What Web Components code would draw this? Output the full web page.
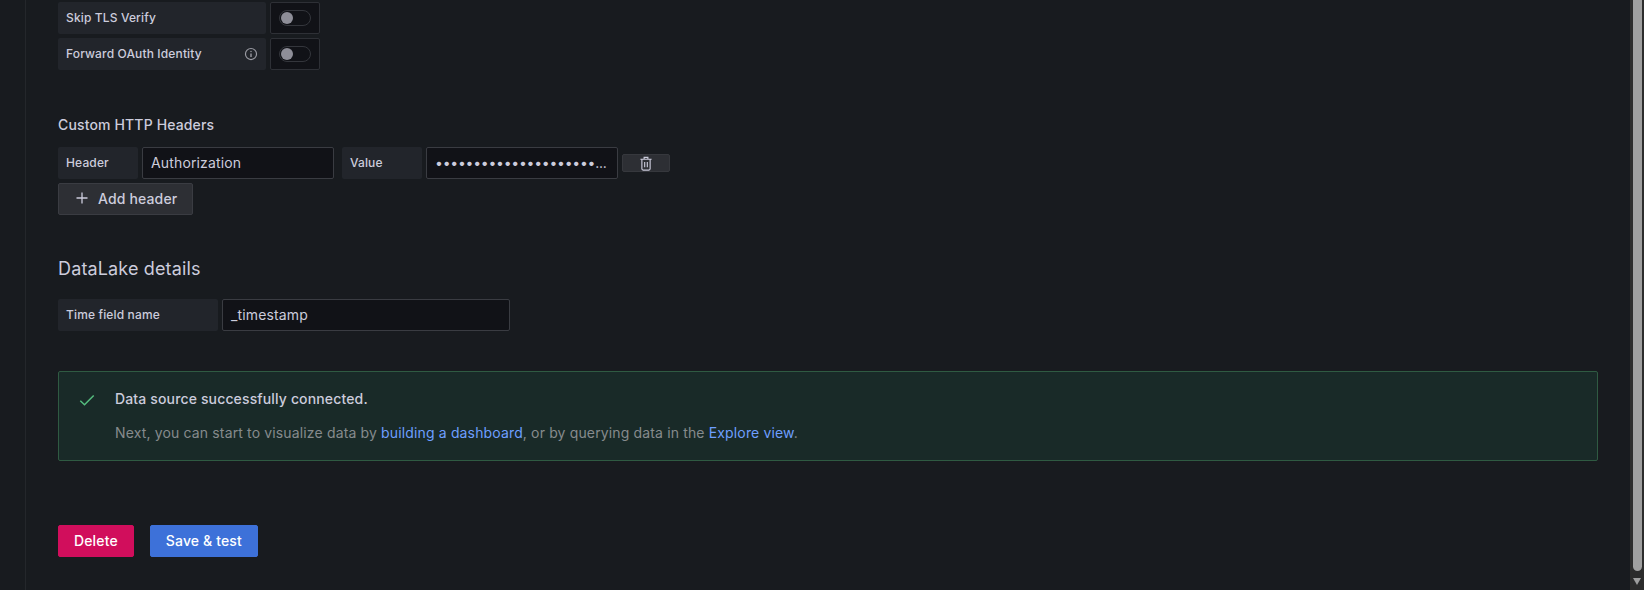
<!DOCTYPE html>
<html>
<head>
<meta charset="utf-8">
<title>DataLake settings</title>
<style>
  html, body { margin: 0; height: 100%; background: #181b1f; overflow: hidden; }
  body { font-family: Inter, "Liberation Sans", sans-serif; color: #ccccdc; letter-spacing: 0.145px; }
</style>
</head>
<body>
<settings-page>
  <field-row><field-label width="208">Skip TLS Verify</field-label><field-switch></field-switch></field-row>
  <field-row style="margin-top:4px"><field-label width="208" info>Forward OAuth Identity</field-label><field-switch></field-switch></field-row>

  <sub-title style="margin-top:46px">Custom HTTP Headers</sub-title>
  <field-row style="margin-top:13px">
    <field-label width="80">Header</field-label>
    <text-box width="192">Authorization</text-box>
    <field-label width="80" style="margin-left:4px">Value</field-label>
    <text-box width="192" secret>•••••••••••••••••••••...</text-box>
    <icon-button></icon-button>
  </field-row>
  <ui-button kind="plus" style="margin-top:4px">Add header</ui-button>

  <section-title style="margin-top:43px">DataLake details</section-title>
  <field-row style="margin-top:19px">
    <field-label width="160">Time field name</field-label>
    <text-box width="288">_timestamp</text-box>
  </field-row>

  <success-alert style="margin-top:40px" heading="Data source successfully connected.">
    Next, you can start to visualize data by <a href="#">building a dashboard</a>, or by querying data in the <a href="#">Explore view</a>.
  </success-alert>

  <div style="display:flex;gap:16px;margin-top:64px">
    <ui-button kind="danger">Delete</ui-button>
    <ui-button kind="primary">Save &amp; test</ui-button>
  </div>
</settings-page>

<script>
'use strict';

/* Small helper: every element just gets a shadow root with its own css + markup */
function shadow(el, html) {
  el.attachShadow({ mode: 'open' }).innerHTML = html;
}

class SettingsPage extends HTMLElement {
  connectedCallback() {
    shadow(this, `
      <style>
        :host { display: flex; height: 590px; box-sizing: border-box; }
        .rail { width: 25px; flex: none; border-right: 1px solid #24272b; }
        .main { flex: 1; min-width: 0; padding: 2px 32px 0 32px; }
        .track { width: 14px; flex: none; background: #2c2c2c; position: relative; }
        .thumb { position: absolute; left: 3px; right: 2px; top: 0; height: 571px; background: #9f9f9f; border-radius: 0 0 5px 5px; }
        .arrow { position: absolute; left: 3px; bottom: 5px; width: 0; height: 0;
                 border-left: 4.5px solid transparent; border-right: 4.5px solid transparent; border-top: 7px solid #9f9f9f; }
      </style>
      <div class="rail"></div>
      <div class="main"><slot></slot></div>
      <div class="track"><div class="thumb"></div><div class="arrow"></div></div>
    `);
  }
}

class FieldRow extends HTMLElement {
  connectedCallback() {
    shadow(this, `
      <style>:host { display: flex; gap: 4px; align-items: center; height: 32px; }</style>
      <slot></slot>
    `);
  }
}

class FieldLabel extends HTMLElement {
  connectedCallback() {
    const info = this.hasAttribute('info') ? `
      <svg viewBox="0 0 24 24" width="14" height="14" fill="none" stroke="#9a9ba3" stroke-width="2">
        <circle cx="12" cy="12" r="9.5"/>
        <path d="M12 11v6" stroke-width="2.4"/><circle cx="12" cy="7.6" r="1.3" fill="#9a9ba3" stroke="none"/>
      </svg>` : '';
    shadow(this, `
      <style>
        :host { display: flex; align-items: center; justify-content: space-between; flex: none; box-sizing: border-box;
                width: ${this.getAttribute('width')}px; height: 32px; padding: 0 8px 1px;
                background: #22252b; border-radius: 2px; font-size: 12px; font-weight: 500; color: #ccccdc; letter-spacing: 0.14px; }
      </style>
      <slot></slot>${info}
    `);
  }
}

class FieldSwitch extends HTMLElement {
  connectedCallback() {
    shadow(this, `
      <style>
        :host { display: flex; align-items: center; justify-content: center; flex: none; box-sizing: border-box;
                width: 50px; height: 32px; background: #111217; border: 1px solid #2e3036; border-radius: 2px; }
        .sw { width: 32px; height: 16px; box-sizing: border-box; border: 1px solid #34363c; border-radius: 8px; position: relative; }
        .sw::before { content: ''; position: absolute; left: 1px; top: 1px; width: 12px; height: 12px; border-radius: 50%; background: #8e8e98; }
      </style>
      <div class="sw"></div>
    `);
  }
}

class TextBox extends HTMLElement {
  connectedCallback() {
    const secret = this.hasAttribute('secret');
    shadow(this, `
      <style>
        :host { display: flex; align-items: center; flex: none; box-sizing: border-box;
                width: ${this.getAttribute('width')}px; height: 32px; padding: 0 8px 1px;
                background: #111217; border: 1px solid #3a3c42; border-radius: 2px;
                font-size: 14px; color: #ccccdc; white-space: nowrap; overflow: hidden;
                letter-spacing: ${secret ? '-0.25px' : '0.145px'}; }
      </style>
      <slot></slot>
    `);
  }
}

class IconButton extends HTMLElement {
  connectedCallback() {
    shadow(this, `
      <style>
        :host { display: flex; align-items: center; justify-content: center; flex: none; box-sizing: border-box;
                width: 48px; height: 18px; background: #2d2f34; border: 1px solid #36383d; border-radius: 2px; }
      </style>
      <svg viewBox="0 0 14 16" width="14" height="15" fill="none" stroke="#ccccdc" stroke-width="1.2">
        <path d="M1 3.5h12M5 3.5V1.5h4v2M2.6 3.5v10.2q0 1.3 1.3 1.3h6.2q1.3 0 1.3-1.3V3.5M5.6 6.5v5.5M8.4 6.5v5.5"/>
      </svg>
    `);
  }
}

class UiButton extends HTMLElement {
  connectedCallback() {
    const kind = this.getAttribute('kind');
    const looks = {
      plus:    'background:#2d2f34;border:1px solid #3a3c42;padding:0 15px 2px 17px;gap:10px;color:#ccccdc;',
      danger:  'background:#d10e5c;border:1px solid #d10e5c;padding:0 15px 2px;color:#fff;',
      primary: 'background:#3d71d9;border:1px solid #3d71d9;padding:0 15px 2px;color:#fff;'
    };
    const icon = kind === 'plus' ? `
      <svg viewBox="0 0 12 12" width="12" height="12" stroke="#ccccdc" stroke-width="1.3"><path d="M6 .5v11M.5 6h11"/></svg>` : '';
    shadow(this, `
      <style>
        :host { display: inline-flex; align-items: center; box-sizing: border-box; height: 32px; border-radius: 2px;
                font-size: 14px; font-weight: 500; ${looks[kind]} }
      </style>
      ${icon}<slot></slot>
    `);
  }
}

class SubTitle extends HTMLElement {
  connectedCallback() {
    shadow(this, `
      <style>:host { display: block; font-size: 14px; line-height: 18px; font-weight: 500; color: #ccccdc; }</style>
      <slot></slot>
    `);
  }
}

class SectionTitle extends HTMLElement {
  connectedCallback() {
    shadow(this, `
      <style>:host { display: block; font-size: 18px; line-height: 22px; font-weight: 400; color: #ccccdc; letter-spacing: 0.14px; }</style>
      <slot></slot>
    `);
  }
}

class SuccessAlert extends HTMLElement {
  connectedCallback() {
    shadow(this, `
      <style>
        :host { display: flex; box-sizing: border-box; height: 90px; background: #192a28;
                border: 1px solid #2f5a42; border-radius: 2px; padding: 16px 20px 0 20px; }
        svg { flex: none; margin-top: 4px; }
        .body { margin-left: 20px; font-size: 14px; line-height: 21px; }
        .head { font-weight: 500; color: #ccccdc; }
        .text { margin-top: 13px; color: #868b8d; }
        ::slotted(a) { color: #6e9fff; text-decoration: none; }
      </style>
      <svg viewBox="0 0 16 16" width="16" height="16" fill="none" stroke="#55bd7f" stroke-width="1.5"><path d="M1.3 8.8l4.2 4 9.2-9.4"/></svg>
      <div class="body">
        <div class="head">${this.getAttribute('heading')}</div>
        <div class="text"><slot></slot></div>
      </div>
    `);
  }
}

customElements.define('settings-page', SettingsPage);
customElements.define('field-row', FieldRow);
customElements.define('field-label', FieldLabel);
customElements.define('field-switch', FieldSwitch);
customElements.define('text-box', TextBox);
customElements.define('icon-button', IconButton);
customElements.define('ui-button', UiButton);
customElements.define('sub-title', SubTitle);
customElements.define('section-title', SectionTitle);
customElements.define('success-alert', SuccessAlert);
</script>
</body>
</html>
